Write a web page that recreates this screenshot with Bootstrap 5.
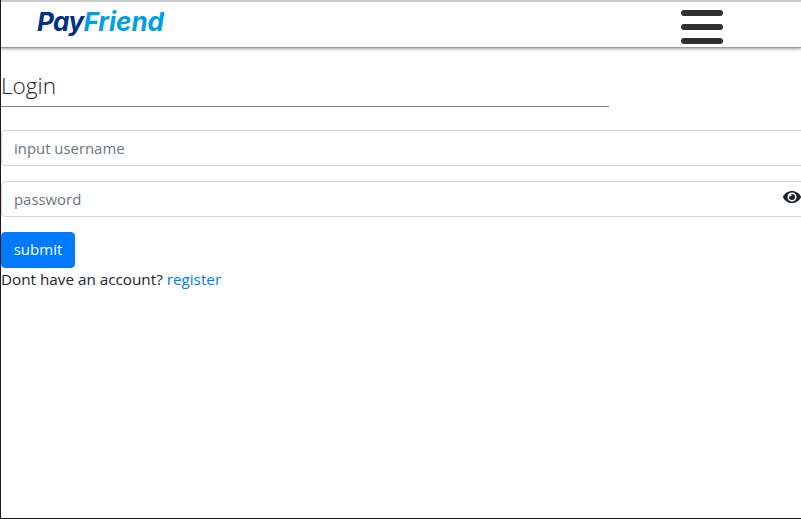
<!DOCTYPE html>
<html lang="en">
<head>
<meta charset="utf-8">
<meta name="viewport" content="width=device-width, initial-scale=1">
<title>PayFriend</title>
<link href="https://cdn.jsdelivr.net/npm/bootstrap@5.3.0/dist/css/bootstrap.min.css" rel="stylesheet">
<style>
body { font-family: "Open Sans", "Noto Sans", sans-serif; font-size: 15px; line-height: 24px; color: #212529; }
.page { height: 519px; border-left: 1px solid #1b1a1d; border-bottom: 1px solid #1b1a1d; background: #fff; }
.topbar { height: 48px; border-top: 2px solid #ccc; border-bottom: 1px solid #999; box-shadow: 0 1px 3px rgba(0,0,0,.4); padding: 0 78px 0 36px; }
.brand { font: italic 700 26px/36px Inter, sans-serif; font-feature-settings: "cv11"; color: #003087; text-decoration: none; margin-top: 2px; letter-spacing: -.6px; }
.brand span { color: #009fe6; letter-spacing: 0; }
.menu-btn { margin-top: 8px; line-height: 0; }
.title { font-size: 22.6px; font-weight: 300; line-height: 29px; width: 608px; height: 36px; margin: 23px 0 23px; border-bottom: 1px solid #808080; }
.login-form { width: 804px; }
.login-form .form-control { height: 36px; font-size: 14.9px; line-height: 22px; border-color: #ced4da; border-radius: 4px; padding: 6px 12px; color: #495057; }
.login-form .form-control::placeholder { color: #6c757d; }
.field { margin-bottom: 15px; }
.eye { top: 8px; right: 4px; line-height: 0; }
.login-form .btn { height: 36px; width: 74px; padding: 4px 0 6px; font-size: 15px; line-height: 24px; border-radius: 4px; background: #007bff; border-color: #007bff; }
.signup { font-size: 15.25px; line-height: 22px; }
.register { color: #007bff; }
</style>
</head>
<body>
<div class="page overflow-hidden">
  <header class="topbar d-flex justify-content-between align-items-start">
    <a class="brand" href="#">Pay<span>Friend</span></a>
    <button class="menu-btn btn border-0 p-0" type="button" aria-label="Menu">
      <svg width="42" height="34" viewBox="0 0 42 34" fill="#2f3031"><rect width="42" height="6" rx="3"/><rect y="14" width="42" height="6" rx="3"/><rect y="28" width="42" height="6" rx="3"/></svg>
    </button>
  </header>
  <main>
    <h1 class="title">Login</h1>
    <form class="login-form">
      <div class="field"><input class="form-control" type="text" placeholder="input username" aria-label="input username"></div>
      <div class="field position-relative">
        <input class="form-control" type="password" placeholder="password" aria-label="password">
        <span class="eye position-absolute">
          <svg width="18" height="16" viewBox="0 0 576 512" fill="#212529"><path d="M572.5 241.4C518.3 135.6 410.9 64 288 64S57.7 135.6 3.5 241.4a32.4 32.4 0 0 0 0 29.2C57.7 376.4 165.1 448 288 448s230.300-71.600 284.500-177.400a32.400 32.400 0 0 0 0-29.200zM288 400a144 144 0 1 1 144-144 143.900 143.900 0 0 1-144 144zm0-240a95.300 95.300 0 0 0-25.300 3.800 47.900 47.900 0 0 1-66.900 66.900A95.800 95.800 0 1 0 288 160z"/></svg>
        </span>
      </div>
      <button class="btn btn-primary d-block" type="button">submit</button>
      <div class="signup">Dont have an account? <a class="register text-decoration-none" href="#">register</a></div>
    </form>
  </main>
</div>
<script src="https://cdn.jsdelivr.net/npm/bootstrap@5.3.0/dist/js/bootstrap.bundle.min.js"></script>
</body>
</html>
